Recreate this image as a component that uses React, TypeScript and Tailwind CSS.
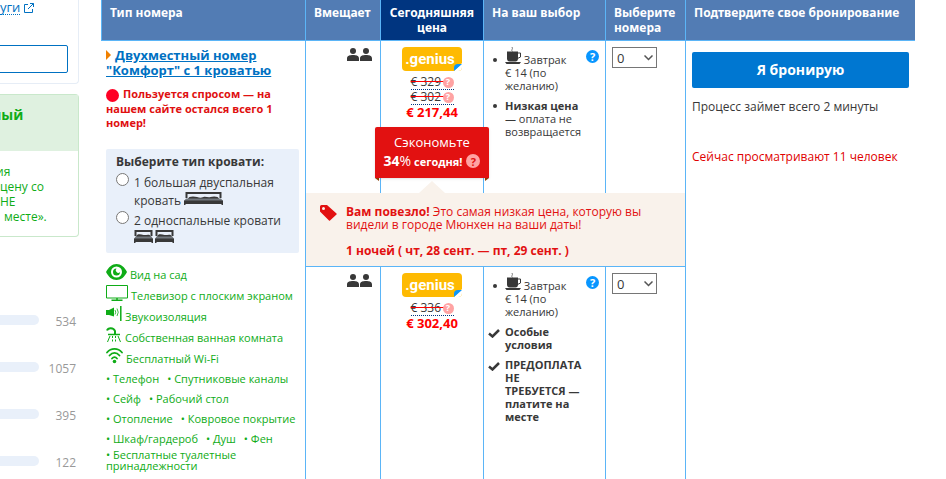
import React from 'react';

const facilities = [
  { icon: 'eye', label: 'Вид на сад' },
  { icon: 'tv', label: 'Телевизор с плоским экраном' },
  { icon: 'sound', label: 'Звукоизоляция' },
  { icon: 'shower', label: 'Собственная ванная комната' },
  { icon: 'wifi', label: 'Бесплатный Wi-Fi' },
];

const extras = [
  ['Телефон', 'Спутниковые каналы'],
  ['Сейф', 'Рабочий стол'],
  ['Отопление', 'Ковровое покрытие'],
  ['Шкаф/гардероб', 'Душ', 'Фен'],
];

const scores = [534, 1057, 395, 122];

const FacilityIcon: React.FC<{ name: string }> = ({ name }) => {
  switch (name) {
    case 'eye':
      return (
        <svg width="21" height="16" viewBox="0 0 21 16" fill="currentColor">
          <path
            fillRule="evenodd"
            d="M0 8C2.500 3 6 0 10.500 0S18.500 3 21 8C18.500 13 15 16 10.500 16S2.500 13 0 8zM10.500 2.500a5.500 5.500 0 1 0 0 11a5.500 5.500 0 0 0 0-11z"
          />
          <path d="M10.500 4.500a3.500 3.500 0 1 0 3.500 3.500a2 2 0 0 1-3.500-3.500z" />
        </svg>
      );
    case 'tv':
      return (
        <svg width="22" height="16" viewBox="0 0 22 16" fill="none" stroke="currentColor">
          <path d="M.5.5h21v12.500H.500z" />
          <path d="M11 13v2M5.500 15.200h11" strokeWidth="1.500" />
        </svg>
      );
    case 'sound':
      return (
        <svg width="16" height="16" viewBox="0 0 16 16" fill="none" stroke="currentColor">
          <path d="M0 4h3l5-2.500v9L3 9H0z" fill="currentColor" stroke="none" />
          <path d="M9 4q1.500 2.200 0 4.500M11 2.500q2.500 3.800 0 7.500" strokeWidth=".8" />
          <path d="M14.800 0v15" strokeWidth="1.500" />
        </svg>
      );
    case 'shower':
      return (
        <svg width="16" height="16" viewBox="0 0 16 16" fill="none" stroke="currentColor">
          <path d="M1 3.500C2 .5 7.500.2 9 4v3" strokeWidth="2" />
          <path d="M2 7.500h12" strokeWidth="1.500" />
          <path d="M4 9 1.500 15M12 9l2.500 6" />
          <path d="M6.500 9v6M9.500 9v6" strokeDasharray="2 1.500" />
        </svg>
      );
    default:
      return (
        <svg width="17" height="16" viewBox="0 0 17 16" fill="none" stroke="currentColor" strokeLinecap="round">
          <path d="M1 4.500C5-.3 12-.3 16 4.500" strokeWidth="1.800" />
          <path d="M3.500 7.500c3-3.400 7-3.400 10 0" strokeWidth="1.800" />
          <path d="M6 10.500c1.500-1.800 3.500-1.800 5 0" strokeWidth="1.800" />
          <circle cx="8.500" cy="13.500" r="1.800" fill="currentColor" stroke="none" />
        </svg>
      );
  }
};

const DoubleBed = () => (
  <svg className="inline-block align-baseline" width="39" height="13" viewBox="0 0 39 13" fill="none">
    <path d="M2.500 6V1h34v5" stroke="#383838" strokeWidth="2" />
    <path d="M4 7c0-3 6-3 9-2s4 .8 6.500 0 4.500 1 7 0 8.500-1 8.500 2z" fill="#383838" />
    <path d="M2 6.500h35L39 9H0z" fill="#72787e" />
    <path d="M0 8.500h39V13h-1.500v-1h-36v1H0z" fill="#383838" />
  </svg>
);

const SingleBed = () => (
  <svg className="inline-block" width="19" height="13" viewBox="0 0 19 13" fill="none">
    <path d="M1.500 6V1h16v5" stroke="#383838" strokeWidth="2" />
    <path d="M2 7c1-4 5-2.500 7.500-2S16 3 17 7z" fill="#383838" />
    <path d="M1.500 6.500h16L19 9H0z" fill="#72787e" />
    <path d="M0 8.500h19V13h-1.500v-1h-16v1H0z" fill="#383838" />
  </svg>
);

const Guests = () => (
  <svg className="ml-auto" role="img" aria-label="2 гостя" width="25" height="13" viewBox="0 0 25 13" fill="#383838">
    <circle cx="6" cy="3" r="3" />
    <circle cx="19" cy="3" r="3" />
    <path d="M0 13V10.500C0 7.500 3 7 6 7s6 .5 6 3.500V13zM13 13v-2.500C13 7.500 16 7 19 7s6 .5 6 3.500V13z" />
  </svg>
);

const Cup = () => (
  <svg className="inline-block align-baseline" width="16" height="17" viewBox="0 0 16 17" fill="none">
    <path d="M7.500 4.500C5.500 3 8.500 2 7 0" stroke="#777" />
    <path d="M2 4.500h11V11.500c0 2-1 3-2.500 3h-6C3 14.500 2 13.500 2 11.500z" fill="#383838" />
    <path d="M12.500 6h3V10l-3 1.500" stroke="#383838" />
    <path d="M0 15h16l-1.500 2h-13z" fill="#383838" />
  </svg>
);

const Check = () => (
  <svg className="mt-1 ml-1" width="12" height="9" viewBox="0 0 12 9" fill="none" stroke="#383838" strokeWidth="2.500">
    <path d="M1 4.500 4.500 7.500 11 1" />
  </svg>
);

const Help: React.FC<{ className: string }> = ({ className }) => (
  <span className={`inline-flex shrink-0 items-center justify-center rounded-full font-bold ${className}`}>?</span>
);

const Genius = () => (
  <div className="relative mx-auto flex h-6 w-[60px] items-center justify-center overflow-hidden rounded bg-[#feba02] pr-1 font-[Roboto] text-[15px] font-bold text-white">
    .genius
    <svg className="absolute right-0 bottom-0" width="8" height="8" viewBox="0 0 8 8">
      <path d="M8 0v8H0z" fill="#fff" />
      <path d="M0 8V5q0-4 4-4h4z" fill="#0896ff" />
    </svg>
  </div>
);

const OldPrice: React.FC<{ value: string }> = ({ value }) => (
  <div className="mx-auto flex h-[15px] w-[43px] items-center justify-between border-b border-dotted border-[#003580] text-xs leading-3">
    <s className="whitespace-pre decoration-[#f00]">{`€ ${value} `}</s>
    <Help className="-ml-1 h-[11px] w-[11px] bg-[#ffa3a3] text-[9px] text-white" />
  </div>
);

const RoomSelect: React.FC<{ id: string }> = ({ id }) => (
  <div className="relative w-[45px]">
    <label htmlFor={id} className="sr-only">Выберите номера</label>
    <select id={id} className="block h-[21px] w-full appearance-none border border-[#767676] bg-white pl-1 text-[13px] leading-4">
      <option>0</option>
      <option>1</option>
    </select>
    <svg className="pointer-events-none absolute top-2 right-1" width="9" height="6" viewBox="0 0 9 6" fill="none" stroke="#555" strokeWidth="1.500">
      <path d="m.5.500 4 4 4-4" />
    </svg>
  </div>
);

const Bullet = () => (
  <span className="flex h-[13px] w-[17px] shrink-0 items-center pl-[5px]">
    <svg width="4" height="4" viewBox="0 0 4 4" fill="#383838"><circle cx="2" cy="2" r="2" /></svg>
  </span>
);

const Breakfast = () => (
  <li className="flex">
    <span className="pt-[6px]"><Bullet /></span>
    <span className="w-[70px]"><Cup /> Завтрак € 14 (по желанию)</span>
  </li>
);

const Sidebar = () => (
  <aside className="mr-[22px] w-[79px] shrink-0 overflow-hidden">
    <div className="h-[84px] rounded-br-sm border-r border-b border-[#e6edf6]">
      <a href="#services" className="flex items-center gap-1 text-[13px] leading-[14px] text-[#0071c2]">
        <span className="border-b border-dotted border-[#0071c2]">уги</span>
        <svg width="10" height="10" viewBox="0 0 10 10" fill="none" stroke="currentColor">
          <path d="M4 1.500H.500v8h8V6M6 .5h3.500V4M9.500.500 4 6" />
        </svg>
      </a>
      <input aria-label="Поиск" className="mt-[30px] -ml-1 block h-7 w-[72px] rounded-xs border border-[#0071c2] bg-white" />
    </div>
    <div className="mt-[10px] rounded-r-sm border-y border-r border-[#c9e8cb] text-xs leading-[15px] text-[#0fac17]">
      <h3 className="-ml-2 h-14 bg-[#dff1e0] pt-[11px] text-sm leading-[18px] font-bold">ный</h3>
      <p className="flex flex-col pt-[13px] pb-[12px] whitespace-nowrap">
        <span className="-ml-1">ия</span>
        <span>цену со</span>
        <span>НЕ</span>
        <span className="ml-1">месте».</span>
      </p>
    </div>
    <ul className="mt-[77px] flex flex-col gap-[31px] pr-[3px] text-xs leading-4 text-[#999]">
      {scores.map((score) => (
        <li key={score} className="flex justify-between">
          <span className="mt-px h-[10px] w-[39px] rounded-r-full bg-[#e9f0fa]" />
          {score}
        </li>
      ))}
    </ul>
  </aside>
);

const RoomInfo = () => (
  <>
    <h3 className="text-[13px] leading-[15px] font-bold text-[#0071c2]">
      <svg className="mr-1 inline-block align-baseline" width="5" height="10" viewBox="0 0 5 10">
        <path d="M0 0l5 5-5 5z" fill="#f08000" />
      </svg>
      <a href="#room" className="underline">Двухместный номер<br />"Комфорт" с 1 кроватью</a>
    </h3>
    <p className="mt-[9px] text-[11px] leading-[14px] font-bold text-[#e01010]">
      <span className="mr-1 inline-block h-[13px] w-[13px] rounded-full bg-[#ff0025] align-middle" />
      Пользуется спросом — на<br />нашем сайте остался всего 1<br />номер!
    </p>
    <fieldset className="mt-[19px] rounded-xs bg-[#e9f0fa] px-[10px] pt-1 pb-[8px] text-xs leading-[18px]">
      <div className="font-bold">Выберите тип кровати:</div>
      <label className="flex items-start gap-[5px] whitespace-nowrap">
        <input type="radio" name="bed" className="mt-[2px] h-[13px] w-[13px] shrink-0" />
        <span className="pt-[3px]">1 большая двуспальная<br />кровать <DoubleBed /></span>
      </label>
      <label className="flex items-start gap-[5px] whitespace-nowrap">
        <input type="radio" name="bed" className="mt-px h-[13px] w-[13px] shrink-0" />
        <span className="pt-[2px]">2 односпальные кровати<br /><span className="flex h-[15px] gap-[2px]"><SingleBed /><SingleBed /></span></span>
      </label>
    </fieldset>
    <div className="mt-[11px] text-[11px] text-[#0fac17]">
      <ul>
        {facilities.map(({ icon, label }) => (
          <li key={label} className="flex h-[21px] items-start gap-[3px] leading-[21px]">
            <FacilityIcon name={icon} />
            {label}
          </li>
        ))}
      </ul>
      {extras.map((row) => (
        <ul key={row[0]} className="flex h-5 gap-2 leading-5 whitespace-nowrap">
          {row.map((item) => <li key={item}>• {item}</li>)}
        </ul>
      ))}
      <p className="leading-[11px]">• Бесплатные туалетные<br />принадлежности</p>
    </div>
  </>
);

const Savings = () => (
  <div className="absolute top-[86px] -right-[6px] -left-[6px] z-10 h-[51px] rounded-t-xs bg-[#e21111] pt-[7px] text-center text-[13px] leading-[17px] text-white shadow-sm">
    Сэкономьте
    <div className="flex items-center justify-center gap-1 text-[11px] font-bold whitespace-nowrap">
      <span><span className="text-sm">34</span><span className="text-sm font-normal">%</span> сегодня!</span>
      <Help className="h-[14px] w-[14px] bg-[#ffa3a3] text-[11px] text-[#e21111]" />
    </div>
    <svg className="absolute top-full left-0" width="4" height="3" viewBox="0 0 4 3"><path d="M0 0h4v3z" fill="#8a3b00" /></svg>
    <svg className="absolute top-full right-0" width="4" height="3" viewBox="0 0 4 3"><path d="M0 0h4L0 3z" fill="#8a3b00" /></svg>
  </div>
);

const App: React.FC = () => (
  <div className="flex h-screen overflow-hidden bg-white pr-[31px] font-['Open_Sans','Noto_Sans',sans-serif] text-[#383838]">
    <Sidebar />
    <main className="min-w-0 flex-1">
      <table className="w-full table-fixed border-separate border-spacing-0 text-xs leading-[13px] [&_td]:border-r [&_td]:border-b [&_td]:border-[#5bb5f7] [&_td]:align-top">
        <colgroup>
          <col className="w-[205px]" />
          <col className="w-[75px]" />
          <col className="w-[103px]" />
          <col className="w-[122px]" />
          <col className="w-[80px]" />
          <col />
        </colgroup>
        <thead>
          <tr className="h-[41px] bg-[#527cb4] text-left font-['Noto_Sans'] text-xs leading-[15px] text-white [&_th]:border-r [&_th]:border-b [&_th]:border-[#5bb5f7] [&_th]:pt-[5px] [&_th]:align-top [&_th]:last:border-r-0">
            <th className="border-l pl-2">Тип номера</th>
            <th className="pl-2">Вмещает</th>
            <th className="bg-[#003580] text-center">Сегодняшняя цена</th>
            <th className="pl-2">На ваш выбор</th>
            <th className="pl-2">Выберите номера</th>
            <th className="pl-2 whitespace-nowrap">Подтвердите свое бронирование</th>
          </tr>
        </thead>
        <tbody>
          <tr className="h-[152px]">
            <td rowSpan={3} className="pt-[7px] pr-[6px] pl-[5px]"><RoomInfo /></td>
            <td className="border-b-0! pt-[7px] pr-2"><Guests /></td>
            <td className="relative border-b-0! pt-[6px]">
              <Genius />
              <div className="mt-1">
                <OldPrice value="329" />
                <OldPrice value="302" />
              </div>
              <div className="text-center text-[13px] leading-[15px] font-bold text-[#f00]">€ 217,44</div>
              <Savings />
              <svg className="absolute bottom-0 left-[38px]" width="26" height="12" viewBox="0 0 26 12"><path d="M13 0l13 12H0z" fill="#f9f2eb" /></svg>
            </td>
            <td className="border-b-0! pt-[6px] pr-[6px] pl-1 text-[11px]">
              <div className="flex justify-between">
                <ul className="flex flex-col gap-[7px]">
                  <Breakfast />
                  <li className="flex">
                    <Bullet />
                    <span><b>Низкая цена</b><br />— оплата не<br />возвращается</span>
                  </li>
                </ul>
                <Help className="mt-[3px] -ml-4 h-[13px] w-[13px] bg-[#0896ff] text-[11px] text-white" />
              </div>
            </td>
            <td className="border-b-0! pt-[6px] pl-[6px]"><RoomSelect id="rooms-1" /></td>
            <td rowSpan={3} className="border-r-0! pt-[11px] pr-[6px] pl-[6px] text-xs leading-4">
              <button type="button" className="block h-9 w-full rounded-xs bg-[#0077d1] text-sm font-bold text-white">Я бронирую</button>
              <p className="mt-[11px]">Процесс займет всего 2 минуты</p>
              <p className="mt-[34px] text-[#e00000]">Сейчас просматривают 11 человек</p>
            </td>
          </tr>
          <tr className="h-[74px]">
            <td colSpan={4} className="bg-[#f9f2eb] pt-3 pl-[14px] text-[#e21111]">
              <div className="flex gap-[9px] leading-[13px]">
                <svg className="shrink-0" width="17" height="16" viewBox="0 0 17 16">
                  <path fillRule="evenodd" d="M0 1.500Q0 0 1.500 0H7l9.500 8.500q.5.500 0 1L10 15.500q-.5.500-1 0L0 6.500zM3.500 2a1.500 1.500 0 1 0 0 3a1.500 1.500 0 0 0 0-3z" fill="#e21111" />
                </svg>
                <div>
                  <p><b>Вам повезло!</b> Это самая низкая цена, которую вы<br />видели в городе Мюнхен на ваши даты!</p>
                  <p className="mt-[13px] font-bold">1 ночей ( чт, 28 сент. — пт, 29 сент. )</p>
                </div>
              </div>
            </td>
          </tr>
          <tr className="h-[213px]">
            <td className="pt-[7px] pr-2"><Guests /></td>
            <td className="pt-[6px]">
              <Genius />
              <div className="mt-1"><OldPrice value="336" /></div>
              <div className="text-center text-[13px] leading-[15px] font-bold text-[#f00]">€ 302,40</div>
            </td>
            <td className="pt-[6px] pr-[6px] pl-1 text-[11px]">
              <div className="flex justify-between">
                <ul className="flex flex-col gap-[7px]">
                  <Breakfast />
                  <li className="flex font-bold">
                    <span className="-ml-1 w-[21px] shrink-0"><Check /></span>
                    <span>Особые<br />условия</span>
                  </li>
                  <li className="flex font-bold">
                    <span className="-ml-1 w-[21px] shrink-0"><Check /></span>
                    <span className="whitespace-nowrap">ПРЕДОПЛАТА<br />НЕ<br />ТРЕБУЕТСЯ —<br />платите на<br />месте</span>
                  </li>
                </ul>
                <Help className="mt-[3px] -ml-4 h-[13px] w-[13px] bg-[#0896ff] text-[11px] text-white" />
              </div>
            </td>
            <td className="pt-[6px] pl-[6px]"><RoomSelect id="rooms-2" /></td>
          </tr>
        </tbody>
      </table>
    </main>
  </div>
);

export default App;
